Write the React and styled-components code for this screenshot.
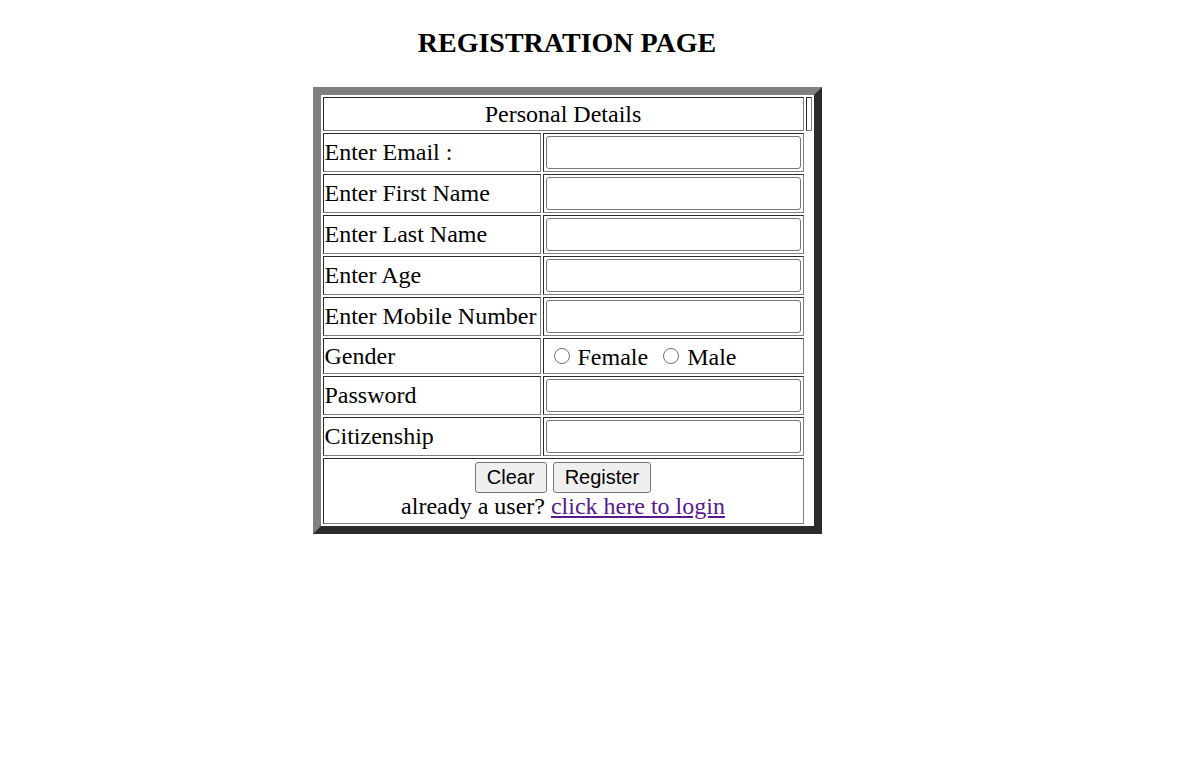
import React from 'react';
import styled, { createGlobalStyle } from 'styled-components';

const GlobalStyle = createGlobalStyle`
  body {
    margin: 0;
    background: #ffffff;
    color: #000000;
    font-family: "Liberation Serif", "Times New Roman", serif;
  }
`;

const Page = styled.div`
  width: 1134px;
  padding-top: 27px;
  display: flex;
  flex-direction: column;
  align-items: center;
`;

const Title = styled.h2`
  margin: 0 0 28px;
  font-size: 28px;
  font-weight: bold;
`;

const FormTable = styled.table`
  border-spacing: 2px;
  border-style: solid;
  border-width: 8px;
  border-color: #808080 #2b2b2b #2b2b2b #808080;
  font-size: 24px;
`;

const Row = styled.tr`
  height: ${(props) => props.$h}px;
`;

const Cell = styled.td`
  border: 1px solid;
  border-color: #2b2b2b #808080 #808080 #2b2b2b;
  padding: ${(props) => (props.$low ? '4px 1px 1px' : '1px')};
  text-align: ${(props) => (props.$center ? 'center' : 'left')};
  white-space: nowrap;
`;

const LabelCell = styled(Cell)`
  width: 214px;
`;

const Stub = styled(Cell)`
  width: 2px;
`;

const TextInput = styled.input`
  display: block;
  box-sizing: border-box;
  width: 255px;
  height: 33px;
  margin: 1px;
  padding: 0 3px;
  border: 1px solid #767676;
  border-radius: 3px;
  background: #ffffff;
  font-family: "Liberation Serif", "Times New Roman", serif;
  font-size: 24px;
  outline: none;
`;

const Radio = styled.input`
  appearance: none;
  box-sizing: border-box;
  width: 16px;
  height: 16px;
  margin: 3px 2px 1px 9px;
  border: 1.5px solid #6f6f6f;
  border-radius: 50%;
  background: #ffffff;
  vertical-align: baseline;
  &:checked {
    background: radial-gradient(circle, #000 0 3px, #fff 3.5px);
  }
`;

const Button = styled.button`
  padding: 3px 11px;
  border: 1px solid #767676;
  border-radius: 3px;
  background: #efefef;
  color: #000000;
  font-family: "Liberation Sans", Arial, sans-serif;
  font-size: 20px;
  cursor: pointer;
`;

const LoginLink = styled.a`
  color: #551a8b;
  text-decoration: underline;
`;

const fields = [
  { label: 'Enter Email :', type: 'email' },
  { label: 'Enter First Name', type: 'text' },
  { label: 'Enter Last Name', type: 'text' },
  { label: 'Enter Age', type: 'text' },
  { label: 'Enter Mobile Number', type: 'text' },
];

const lastFields = [
  { label: 'Password', type: 'password' },
  { label: 'Citizenship', type: 'text' },
];

function FieldRow({ label, type }) {
  return (
    <Row $h={39}>
      <LabelCell>{label}</LabelCell>
      <Cell>
        <TextInput type={type} />
      </Cell>
    </Row>
  );
}

export default function App() {
  return (
    <>
      <GlobalStyle />
      <Page>
        <Title>REGISTRATION PAGE</Title>
        <form onSubmit={(e) => e.preventDefault()}>
          <FormTable>
            <tbody>
              <Row $h={34}>
                <Cell colSpan={2} $center>Personal Details</Cell>
                <Stub />
              </Row>
              {fields.map((f) => (
                <FieldRow key={f.label} label={f.label} type={f.type} />
              ))}
              <Row $h={36}>
                <LabelCell>Gender</LabelCell>
                <Cell $low>
                  <label>
                    <Radio type="radio" name="gender" value="female" />
                    {' '}
                    Female
                  </label>
                  {' '}
                  <label>
                    <Radio type="radio" name="gender" value="male" />
                    {' '}
                    Male
                  </label>
                </Cell>
              </Row>
              {lastFields.map((f) => (
                <FieldRow key={f.label} label={f.label} type={f.type} />
              ))}
              <Row $h={66}>
                <Cell colSpan={2} $center>
                  <Button type="reset">Clear</Button>
                  {' '}
                  <Button type="submit">Register</Button>
                  <br />
                  already a user?
                  {' '}
                  <LoginLink href="#login">click here to login</LoginLink>
                </Cell>
              </Row>
            </tbody>
          </FormTable>
        </form>
      </Page>
    </>
  );
}
